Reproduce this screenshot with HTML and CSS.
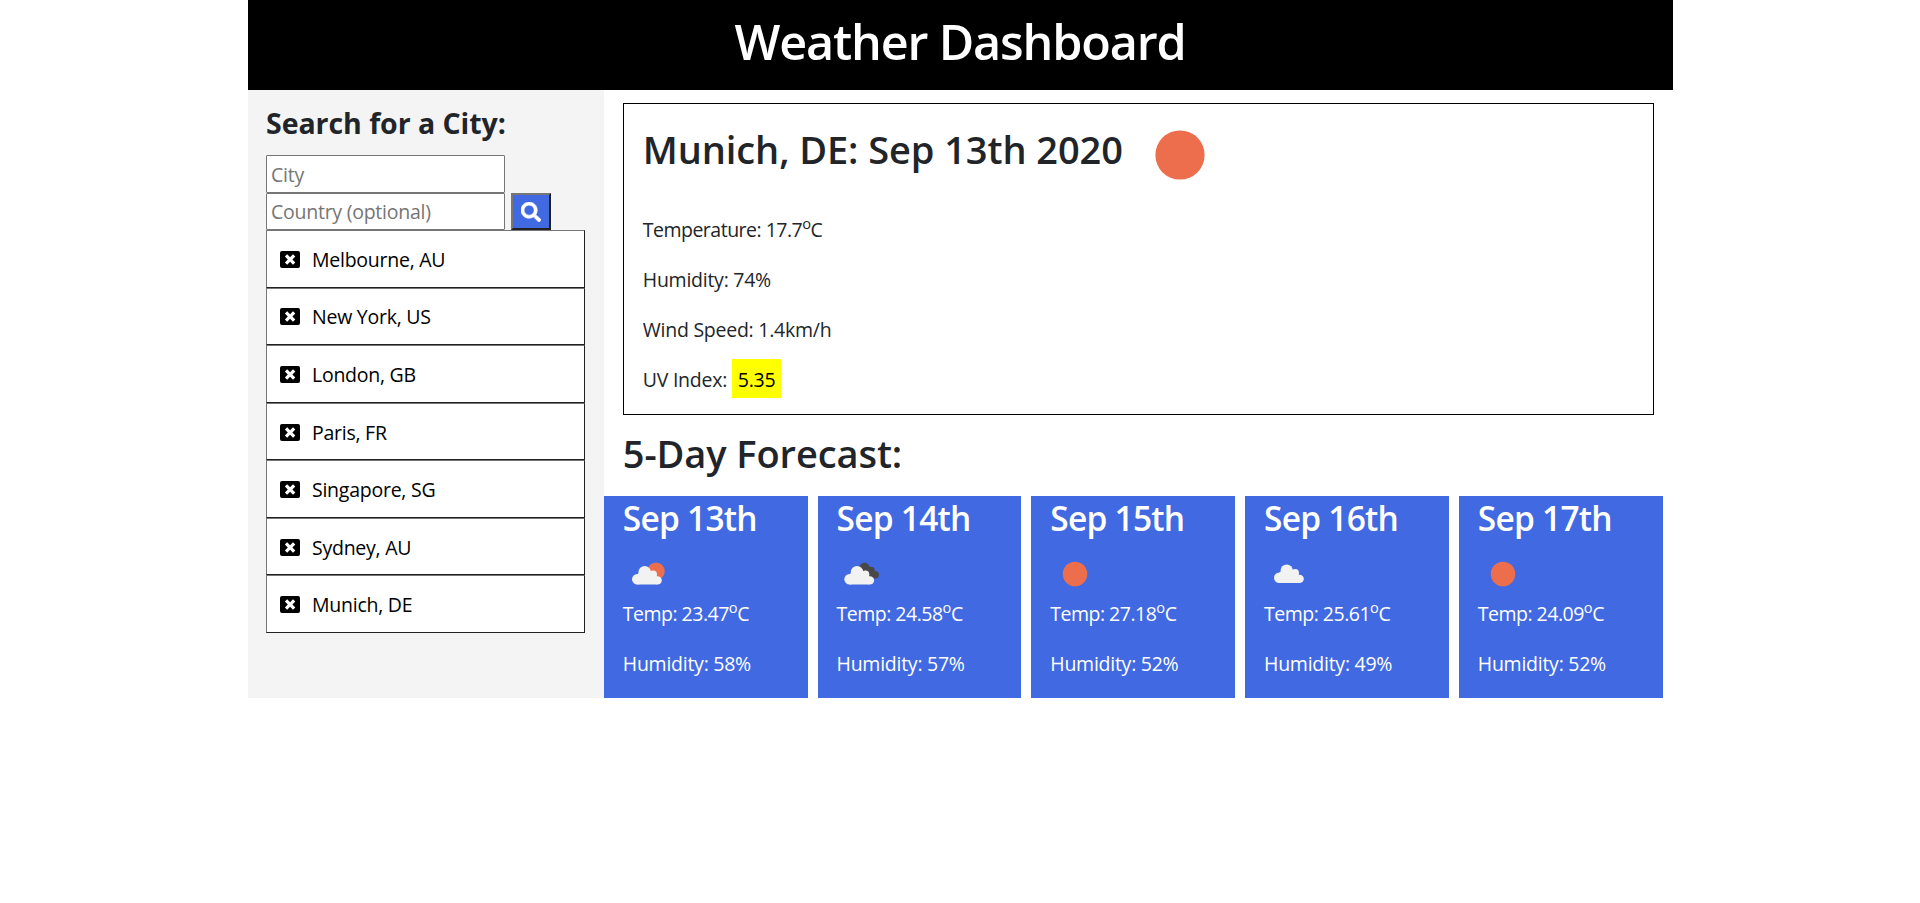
FILE: index.html
```html
<!DOCTYPE html>
<html lang="en">
<head>
<meta charset="utf-8">
<title>Weather Dashboard</title>
<link rel="stylesheet" href="styles.css">
</head>
<body>
<svg class="sprite" aria-hidden="true">
  <symbol id="close" viewBox="0 0 20 18"><path fill-rule="evenodd" d="M2 0H18Q20 0 20 2V15Q20 17 18 17H2Q0 17 0 15V2Q0 0 2 0ZM7.2 3.2L4.9 5.5L7.8 8.5L4.9 11.5L7.2 13.8L10.1 10.8L13 13.8L15.300 11.5L12.4 8.500L15.3 5.5L13 3.2L10.1 6.2Z"/></symbol>
  <symbol id="sun" viewBox="0 0 50 50"><circle cx="25" cy="25" r="12.3" fill="#ec6e4c"/></symbol>
  <g id="cloud-shape" fill="#f2f2f2"><circle cx="12.7" cy="6.2" r="6.2"/><circle cx="21.1" cy="8.500" r="3.9"/><circle cx="5.3" cy="13.3" r="5.3"/><circle cx="25.6" cy="14.400" r="4.2"/><path d="M5.300 8L12 4L21 8L25 10.400V18.600H5.300z"/></g>
  <symbol id="cloud" viewBox="0 0 50 50"><use href="#cloud-shape" x="10" y="15.500"/></symbol>
  <symbol id="sun-cloud" viewBox="0 0 50 50"><circle cx="33" cy="22.200" r="8.7" fill="#ec6e4c"/><use href="#cloud-shape" x="9" y="17"/></symbol>
  <symbol id="dark-cloud" viewBox="0 0 50 50"><g fill="#48484a"><circle cx="27.500" cy="18.800" r="5.100"/><circle cx="34.500" cy="21.300" r="3.200"/><circle cx="38.300" cy="25.800" r="3.700"/><path d="M29 15L35 19L38 29L28 27z"/></g><use href="#cloud-shape" x="7.300" y="17"/></symbol>
</svg>
<div class="container">
  <header class="header"><h1>Weather Dashboard</h1></header>
  <div class="layout">
    <aside class="sidebar">
      <h3>Search for a City:</h3>
      <form class="search">
        <input class="field" type="text" placeholder="City">
        <input class="field" type="text" placeholder="Country (optional)">
        <button class="search-btn" type="button" aria-label="Search">
          <svg width="20" height="20" viewBox="0 0 512 512" fill="#fff" stroke="#fff" stroke-width="14"><path d="M505 442.700L405.300 343c-4.500-4.500-10.600-7-17-7H372c27.600-35.300 44-79.700 44-128C416 93.100 322.900 0 208 0S0 93.100 0 208s93.100 208 208 208c48.300 0 92.700-16.400 128-44v16.300c0 6.400 2.500 12.500 7 17l99.700 99.700c9.400 9.400 24.600 9.400 33.900 0l28.300-28.300c9.400-9.400 9.400-24.600.1-34zM208 336c-70.700 0-128-57.200-128-128 0-70.700 57.200-128 128-128 70.700 0 128 57.200 128 128 0 70.700-57.200 128-128 128z"/></svg>
        </button>
      </form>
      <div class="cities">
        <button class="city"><svg class="x"><use href="#close"/></svg>Melbourne, AU</button>
        <button class="city"><svg class="x"><use href="#close"/></svg>New York, US</button>
        <button class="city"><svg class="x"><use href="#close"/></svg>London, GB</button>
        <button class="city"><svg class="x"><use href="#close"/></svg>Paris, FR</button>
        <button class="city"><svg class="x"><use href="#close"/></svg>Singapore, SG</button>
        <button class="city"><svg class="x"><use href="#close"/></svg>Sydney, AU</button>
        <button class="city"><svg class="x"><use href="#close"/></svg>Munich, DE</button>
      </div>
    </aside>
    <main class="main">
      <section class="current">
        <div class="current-head"><h2>Munich, DE: Sep 13th 2020</h2><svg class="icon-lg"><use href="#sun"/></svg></div>
        <p class="temp">Temperature: 17.7<sup>o</sup>C</p>
        <p>Humidity: 74%</p>
        <p>Wind Speed: 1.4km/h</p>
        <p>UV Index: <span class="uv">5.35</span></p>
      </section>
      <h2 class="forecast-title">5-Day Forecast:</h2>
      <section class="forecast">
        <article class="day"><h4>Sep 13th</h4><svg class="icon"><use href="#sun-cloud"/></svg><p class="temp">Temp: 23.47<sup>o</sup>C</p><p>Humidity: 58%</p></article>
        <article class="day"><h4>Sep 14th</h4><svg class="icon"><use href="#dark-cloud"/></svg><p class="temp">Temp: 24.58<sup>o</sup>C</p><p>Humidity: 57%</p></article>
        <article class="day"><h4>Sep 15th</h4><svg class="icon"><use href="#sun"/></svg><p class="temp">Temp: 27.18<sup>o</sup>C</p><p>Humidity: 52%</p></article>
        <article class="day"><h4>Sep 16th</h4><svg class="icon"><use href="#cloud"/></svg><p class="temp">Temp: 25.61<sup>o</sup>C</p><p>Humidity: 49%</p></article>
        <article class="day"><h4>Sep 17th</h4><svg class="icon"><use href="#sun"/></svg><p class="temp">Temp: 24.09<sup>o</sup>C</p><p>Humidity: 52%</p></article>
      </section>
    </main>
  </div>
</div>
</body>
</html>
```
FILE: styles.css
```css
* { box-sizing: border-box; }
body { margin: 0; background: #fff; color: #212529; font: 19.5px/30px "Open Sans", "Noto Sans", sans-serif; letter-spacing: -0.25px; }
h1, h2, h3, h4, p { margin: 0; }
.sprite { display: none; }
.container { width: 1425px; margin: 0 auto; }
.header { height: 90px; background: #000; color: #fff; text-align: center; }
.header h1 { font-size: 48.5px; font-weight: 600; line-height: 83px; letter-spacing: -1.15px; }
.layout { display: flex; height: 608px; }
.sidebar { flex: 0 0 356.25px; padding: 15px 18.5px 0; background: #f4f4f4; }
.sidebar h3 { height: 50px; font-size: 28.5px; font-weight: 700; line-height: 36px; letter-spacing: -0.05px; }
.search { display: grid; grid-template-columns: 239px 40px; column-gap: 6px; grid-template-rows: 38px 37px; }
.field { width: 239px; padding: 0 4px; border: 1px solid #767676; border-radius: 1px; background: #fff; font: inherit; letter-spacing: inherit; }
.field:first-child { grid-column: 1 / 3; padding-top: 2px; }
.field::placeholder { color: #757575; }
.search-btn { display: flex; align-items: center; justify-content: center; padding: 0; border: 2px solid; border-color: #767676 #212121 #212121 #767676; background: #4169e1; }
.cities { display: flex; flex-direction: column; height: 403px; }
.city { flex: 1; display: flex; align-items: center; gap: 12px; padding: 2px 0 0 13px; border: 1px solid; border-color: #767676 #212121 #212121 #767676; background: #fff; color: #000; font: inherit; letter-spacing: inherit; text-align: left; }
.x { width: 20px; height: 18px; }
.main { flex: 1; min-width: 0; }
.current { height: 312px; margin: 13px 19px 0; padding: 0 19px; border: 1px solid #000; }
.current-head { display: flex; height: 101px; gap: 6px; }
.current h2 { width: 481px; font-size: 38px; font-weight: 600; line-height: 90px; white-space: nowrap; letter-spacing: -0.08px; }
.icon-lg { width: 100px; height: 100px; margin-top: 0.5px; }
.current p { line-height: 50px; }
.uv { padding: 7px 6px 5px; background: #ff0; color: #000; }
.temp { letter-spacing: -0.5px; }
sup { font-size: 75%; line-height: 0; vertical-align: 8px; }
.forecast-title { height: 81px; padding-left: 19px; font-size: 38px; font-weight: 600; line-height: 77px; letter-spacing: -0.08px; }
.forecast { display: flex; gap: 10px; height: 202px; }
.day { flex: 0 0 203.75px; padding-left: 19px; background: #4169e1; color: #fff; white-space: nowrap; }
.day h4 { height: 53px; font-size: 33.5px; font-weight: 600; line-height: 45px; letter-spacing: -0.75px; }
.icon { display: block; width: 50px; height: 50px; }
.day p { height: 50px; line-height: 30px; }
```
